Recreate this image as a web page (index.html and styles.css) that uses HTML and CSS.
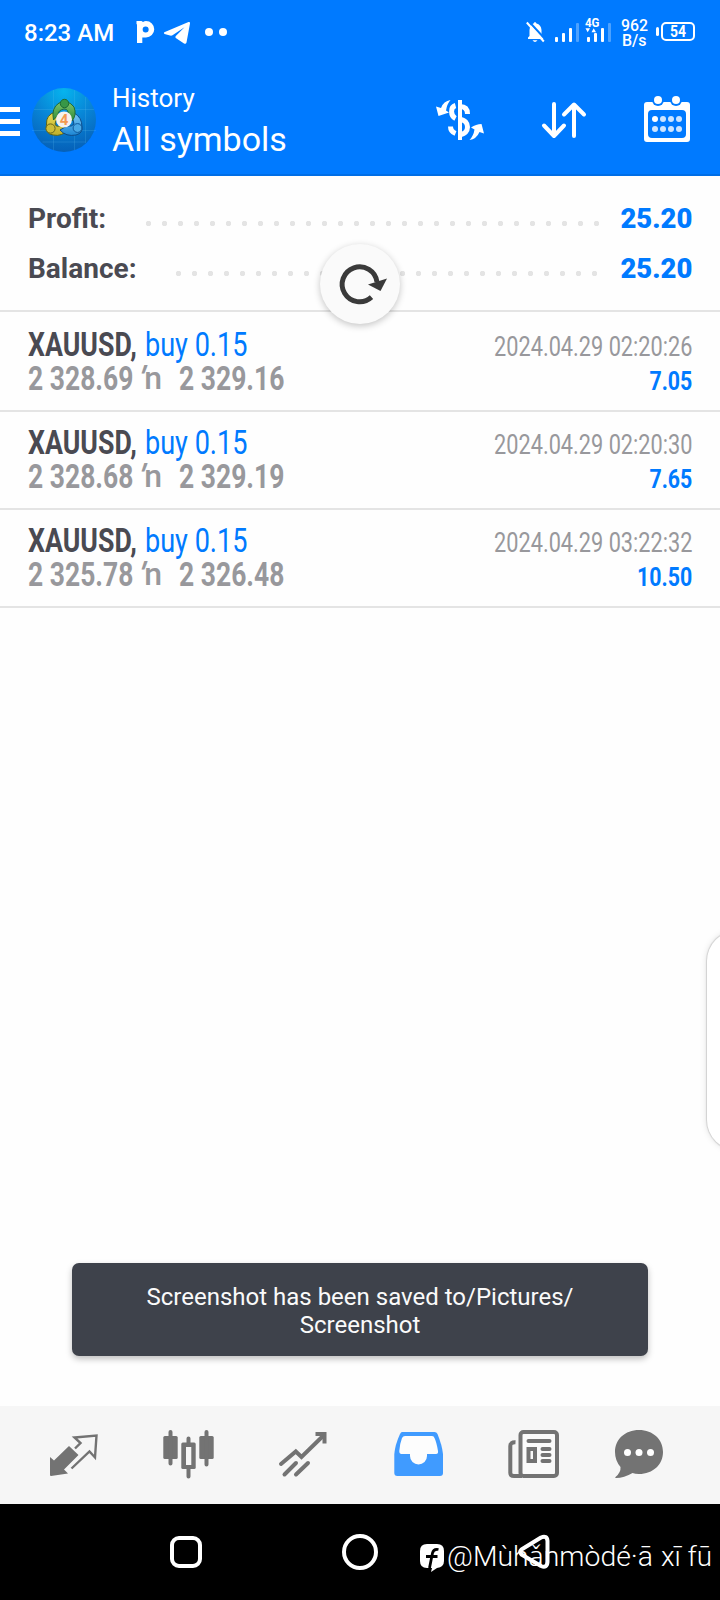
FILE: index.html
```html
<!DOCTYPE html>
<html lang="en">
<head>
<meta charset="utf-8">
<title>History</title>
<link rel="stylesheet" href="styles.css">
</head>
<body>
<div class="screen">
  <div class="statusbar">
    <span class="clock">8:23 AM</span>
    <svg class="notes" width="110" height="64" viewBox="130 0 110 64" fill="#fff">
      <path fill-rule="evenodd" d="M136.5 21H141.500L143 22C144 21.200 145 21 146 21A8.100 8.100 0 0 1 146 37.500H142.300V43H137V24.500L136.500 24ZM145.600 26.500A3 3 0 1 0 145.700 32.500A3 3 0 0 0 145.600 26.500Z"/>
      <path d="M164.300 32.300L188.500 22.100Q190.400 21.500 190 23.500L186.500 42.500Q186 44.500 184 43.500L175.800 38Q174.800 37.200 175.800 36L184.500 27.300L172.500 35.300Q171.500 36 170 35.600L164.500 33.900Q163.300 33.200 164.300 32.300Z"/>
      <circle cx="209" cy="32" r="4"/><circle cx="223" cy="32" r="4"/>
    </svg>
    <svg class="signals" width="180" height="64" viewBox="520 0 180 64" fill="#fff">
      <path d="M528 39V37.500L529.500 36V30Q530 24.500 533.500 23.500Q535 20.500 536.500 23.500Q541 24.500 541.500 30V36L543.500 38V39ZM532.500 40.300H537.500Q535 43.500 532.500 40.300Z"/>
      <path d="M528 20.500L545.500 39.500" stroke="#007aff" stroke-width="2"/>
      <path d="M526.800 22.500L543.800 41.500" stroke="#fff" stroke-width="2"/>
      <rect x="555" y="37" width="3" height="5" rx="1"/><rect x="562" y="33" width="3" height="9" rx="1"/><rect x="569" y="28" width="3" height="14" rx="1"/><rect x="576" y="23" width="3" height="19" rx="1" opacity=".3"/>
      <rect x="587" y="37" width="3" height="5" rx="1"/><rect x="594" y="33" width="3" height="9" rx="1"/><rect x="601" y="28" width="3" height="14" rx="1"/><rect x="608" y="23" width="3" height="19" rx="1" opacity=".3"/>
      <path d="M585.500 28.300H590L587.700 32.300ZM591.500 32.300H596L593.700 28.300Z"/>
      <text class="tiny" x="585" y="27" textLength="14.500" lengthAdjust="spacingAndGlyphs">4G</text>
      <text class="rate" x="621" y="30.500" textLength="27" lengthAdjust="spacingAndGlyphs">962</text>
      <text class="rate" x="622" y="46" textLength="24.500" lengthAdjust="spacingAndGlyphs">B/s</text>
      <rect x="662" y="23" width="32" height="17" rx="4" fill="none" stroke="#fff" stroke-width="2"/>
      <rect x="656" y="27" width="3" height="9" rx="1.500"/>
      <text class="level" x="670" y="37" textLength="16" lengthAdjust="spacingAndGlyphs">54</text>
    </svg>
  </div>

  <header class="appbar">
    <svg class="menu" width="104" height="110" viewBox="0 64 104 110">
      <defs>
        <radialGradient id="disc" cx=".5" cy=".05" r=".95"><stop offset="0" stop-color="#06b4ee"/><stop offset=".5" stop-color="#0884d6"/><stop offset="1" stop-color="#0560b8"/></radialGradient>
        <linearGradient id="green" x2="0" y2="1"><stop offset="0" stop-color="#83c66b"/><stop offset="1" stop-color="#288a38"/></linearGradient>
        <linearGradient id="gold" x2="0" y2="1"><stop offset="0" stop-color="#eadb55"/><stop offset="1" stop-color="#c0b02a"/></linearGradient>
        <linearGradient id="blue" x2="0" y2="1"><stop offset="0" stop-color="#7ccaf5"/><stop offset="1" stop-color="#1c86d4"/></linearGradient>
      </defs>
      <path fill="#fff" d="M0 107H20V112H0ZM0 119H20V124H0ZM0 131H20V136H0Z"/>
      <circle cx="64" cy="120" r="32" fill="url(#disc)"/>
      <path stroke="#63c4f0" stroke-opacity=".2" d="M53.500 90V150M74.500 90V150M85.500 97V143M34 109.500H94M32 130.500H96M42.500 142H85.500"/>
      <g stroke-width="1">
        <path fill="url(#gold)" stroke="#59651a" d="M55 112Q46 115 46.500 124Q45 134 53 135Q62 137 69 129L62 125Q56 128 55 124Q55 120 59 118Z"/>
        <path fill="url(#blue)" stroke="#0d4c8b" d="M74 113Q82 117 82 127Q83 133 76 135Q66 137 60 130L67 126Q72 127 74 124Q74 119 70 117Z"/>
        <path fill="url(#green)" stroke="#216a37" d="M53.500 120Q51 108 59 103Q68 99 74 107Q77 115 72 121L68 115Q69 109 64 109Q58 110 58 115Z"/>
        <circle cx="64.500" cy="103.500" r="4.200" fill="#379747" stroke="#1c6b35"/>
        <circle cx="50.500" cy="128.500" r="4.600" fill="#cdbd38" stroke="#67651a"/>
        <circle cx="77.500" cy="128" r="4.400" fill="#48a8e6" stroke="#0d579b"/>
      </g>
      <circle cx="64" cy="119.500" r="8" fill="#f4f1ee"/>
      <text class="four" x="64" y="125" text-anchor="middle">4</text>
    </svg>
    <div class="titles"><div class="small-title">History</div><div class="big-title">All symbols</div></div>
    <svg class="actions" width="284" height="110" viewBox="426 64 284 110" fill="none" stroke="#fff">
      <path stroke-width="4" d="M460 100V140"/>
      <path stroke-width="5" d="M467.500 114Q467.500 106.500 460 106.500M455.500 105.500C450 107 450.500 116 455.500 118.500M460 119.500C470 120 470 134 460 134.500M450.500 126.500Q450.500 131.500 455.500 133.500"/>
      <path fill="#fff" stroke="none" d="M450.500 100Q443.500 101 441 108L436 106.500L438.500 116L449 112.500L446 110.500Q447 104 450.500 100ZM469.500 140Q476.500 139 479.500 132L484 133.500L481.500 124Q476 124 471 127.500L474.500 129.500Q473.500 136 469.500 140Z"/>
      <path stroke-width="4" stroke-linecap="round" stroke-linejoin="round" d="M554 104V135.500M544 125.500L554 136L564 125.500M574 136V105M564 114.500L574 104.500L584 114.500"/>
      <path fill="#fff" stroke="none" fill-rule="evenodd" d="M647 102H687Q690 102 690 105V139Q690 142 687 142H647Q644 142 644 139V105Q644 102 647 102ZM652 110Q648 110 648 114V134Q648 138 652 138H682Q686 138 686 134V114Q686 110 682 110Z"/>
      <g stroke="none"><g fill="#007aff"><circle cx="658" cy="100" r="6"/><circle cx="676" cy="100" r="6"/></g><g fill="#fff"><circle cx="658" cy="100" r="4"/><circle cx="676" cy="100" r="4"/><circle cx="655" cy="119" r="3"/></g>
      <g fill="#cce4ff"><circle cx="663" cy="119" r="3"/><circle cx="671" cy="119" r="3"/><circle cx="679" cy="119" r="3"/><circle cx="655" cy="129" r="3"/><circle cx="663" cy="129" r="3"/><circle cx="671" cy="129" r="3"/><circle cx="679" cy="129" r="3"/></g></g>
    </svg>
  </header>

  <main class="content">
    <section class="summary">
      <div class="total"><span>Profit:</span><i class="dots dots-profit"></i><b>25.20</b></div>
      <div class="total"><span>Balance:</span><i class="dots dots-balance"></i><b>25.20</b></div>
    </section>
    <div class="deal">
      <div class="line"><span class="symbol">XAUUSD,</span><span class="side">buy 0.15</span><span class="date">2024.04.29 02:20:26</span></div>
      <div class="line"><span class="price">2 328.69</span><span class="arrow"><em>′</em>n</span><span class="price">2 329.16</span><span class="gain">7.05</span></div>
    </div>
    <div class="deal">
      <div class="line"><span class="symbol">XAUUSD,</span><span class="side">buy 0.15</span><span class="date">2024.04.29 02:20:30</span></div>
      <div class="line"><span class="price">2 328.68</span><span class="arrow"><em>′</em>n</span><span class="price">2 329.19</span><span class="gain">7.65</span></div>
    </div>
    <div class="deal">
      <div class="line"><span class="symbol">XAUUSD,</span><span class="side">buy 0.15</span><span class="date">2024.04.29 03:22:32</span></div>
      <div class="line"><span class="price">2 325.78</span><span class="arrow"><em>′</em>n</span><span class="price">2 326.48</span><span class="gain">10.50</span></div>
    </div>
  </main>

  <nav class="tabs">
    <svg width="115" height="98" viewBox="16 1406 115 98" fill="#737373"><path d="M50 1457L54 1460.500L69 1446L78.500 1455L64 1469.500L68 1473.500L51 1476Q50 1476 50 1475Z"/><path fill="none" stroke="#737373" stroke-width="2.400" d="M71.500 1468.500L89.500 1451.500L95 1457.500L96.500 1435.500L74.500 1437.500L80.500 1443L75 1448.500"/></svg>
    <svg width="115" height="98" viewBox="131 1406 115 98" fill="#737373"><rect x="163.300" y="1436" width="14.400" height="23" rx="1.500"/><rect x="199.300" y="1436" width="14.400" height="23" rx="1.500"/><path stroke="#737373" stroke-width="4" stroke-linecap="round" d="M170.500 1432V1463.500M206.500 1432V1464.500M188.500 1438.500V1443M188.500 1469V1476.500"/><rect x="181.300" y="1442.500" width="14.400" height="26.500" rx="1.500"/><path fill="#f6f6f6" d="M186 1447H191.300V1465H186Z"/></svg>
    <svg width="115" height="98" viewBox="246 1406 115 98" fill="none" stroke="#737373" stroke-width="4" stroke-linecap="round"><path d="M281 1464L295.800 1451.500L301.500 1457L324 1435M284.500 1474.500L296 1463M296 1474.500L308 1463"/><path stroke-linecap="butt" d="M315.500 1434H324.500V1443.500"/></svg>
    <svg width="115" height="98" viewBox="361 1406 115 98" fill="#409bff"><path d="M402 1432H434.500Q436.500 1432 437.500 1434Q442 1445 443 1454V1473Q443 1476 440 1476H397.300Q394.300 1476 394.300 1473V1454Q395 1445 400 1434Q401 1432 402 1432Z"/><path fill="#fdfdfd" d="M405 1436Q403 1436 402 1438Q400 1443 399.300 1451Q399.200 1454 401.500 1454H410V1456A8.500 8.500 0 0 0 427 1456V1454H436Q438.500 1454 438 1451Q436.500 1442 434.500 1438Q434 1436 432 1436Z"/></svg>
    <svg width="115" height="98" viewBox="476 1406 115 98" fill="none" stroke="#737373" stroke-width="4"><rect x="520.500" y="1432" width="36.500" height="44" rx="3" fill="#fafafa"/><path d="M515.500 1442.300Q510.300 1442 510.300 1446V1473Q510.300 1476 514 1476H522"/><path stroke-linecap="round" d="M528.500 1441H549.500M542.500 1449H549.500M542.500 1455H549.500M542.500 1461H549.500"/><rect x="528.500" y="1449" width="6.500" height="12"/></svg>
    <svg width="115" height="98" viewBox="591 1406 115 98" fill="#737373"><path d="M639 1430C653 1430 663 1439.500 663 1452C663 1464.500 653 1474 639 1474Q635 1474 632.500 1473Q624 1478 616 1478Q614.500 1478 615.500 1477Q621 1472.500 620.500 1467Q615 1460.500 615 1452C615 1439.500 625 1430 639 1430Z"/><g fill="#fff"><circle cx="627.500" cy="1452.500" r="3.500"/><circle cx="639" cy="1452.500" r="3.500"/><circle cx="650.500" cy="1452.500" r="3.500"/></g></svg>
  </nav>
  <div class="sysnav">
    <svg width="720" height="96" viewBox="0 1504 720 96" fill="none" stroke="#fff" stroke-width="4">
      <rect x="172" y="1538" width="28" height="28" rx="7"/>
      <circle cx="360" cy="1552" r="16"/>
      <path stroke-linejoin="round" d="M521.500 1549.500L541 1537.500Q547 1535 547.500 1541V1562Q547 1568.500 541 1566L521.500 1554.500Q519 1552 521.500 1549.500Z"/>
      <path fill="#fff" stroke="none" d="M427 1544H437Q444 1544 444 1551V1561Q444 1567 437 1568L431 1572L432 1568H427Q420 1568 420 1561V1551Q420 1544 427 1544Z"/>
      <path stroke="#000" stroke-width="2.800" d="M438.500 1549.500Q433.500 1548.500 432.500 1553L429.500 1568M426 1556.500H437.500"/>
      <text class="watermark" x="447" y="1565.500" textLength="206" lengthAdjust="spacingAndGlyphs">@Mùhǎnmòdé·ā</text>
      <text class="watermark" x="661" y="1565.500" textLength="51" lengthAdjust="spacingAndGlyphs">xī fū</text>
    </svg>
  </div>

  <div class="refresh"><svg width="80" height="80" viewBox="320 244 80 80"><path fill="none" stroke="#3a3a3a" stroke-width="5" d="M377 282A17.500 17.500 0 1 0 371.500 297.200"/><path fill="#3a3a3a" d="M368 284.500L387 278.500L380.500 291Z"/></svg></div>
  <div class="edge-panel"></div>
  <div class="toast">Screenshot has been saved to/Pictures/<br>Screenshot</div>
</div>
</body>
</html>
```

FILE: styles.css
```css
* { box-sizing: border-box; }
body { margin: 0; font-family: Roboto, "Liberation Sans", sans-serif; background: #fefefe; }
svg { display: block; flex: none; }
.screen { position: relative; width: 720px; height: 1600px; overflow: hidden; display: flex; flex-direction: column; background: #fefefe; }
.statusbar { height: 64px; flex: none; display: flex; background: #007aff; color: #fff; padding-left: 24px; }
.clock { width: 106px; font-size: 24px; font-weight: 500; line-height: 67px; white-space: nowrap; }
.signals { margin-left: 280px; }
.tiny { font: 700 12px Roboto, sans-serif; }
.rate { font: 500 16px Roboto, sans-serif; }
.level { font: 700 16px Roboto, sans-serif; }
.four { font: 700 15px Roboto, sans-serif; fill: #f39a50; }
.appbar { height: 112px; flex: none; display: flex; background: #007aff; border-bottom: 2px solid #006ee6; color: #fff; }
.titles { width: 322px; padding: 17px 0 0 8px; white-space: nowrap; }
.small-title { font-size: 26px; line-height: 34px; }
.big-title { font-size: 34px; line-height: 48px; }
.content { flex: 1; }
.summary { height: 136px; padding-top: 17px; border-bottom: 2px solid #e4e4e4; margin-bottom: 2px; }
.total { height: 50px; padding: 0 28px; display: flex; align-items: center; font-size: 28px; font-weight: 700; color: #4a4a52; }
.total b { color: #007aff; margin-left: auto; transform: scaleX(.98); transform-origin: 100% 50%; }
.dots { height: 16px; margin-top: 10px; background: radial-gradient(circle at 8.500px 8.500px, #e4e4e4 2.400px, transparent 3px) 0 0 / 16px 16px; }
.total span { width: 112px; }
.dots-profit { width: 464px; }
.total .dots-balance { width: 432px; margin-left: 30px; }
.deal { height: 98px; padding: 14px 28px 0; border-bottom: 2px solid #e4e4e4; }
.line { display: flex; height: 34px; line-height: 33px; font-size: 33px; white-space: nowrap; }
.line span { display: block; transform-origin: 0 50%; }
.line .symbol { width: 117px; font-weight: 700; color: #4a4a52; transform: scaleX(.81); }
.line .side { width: 120px; color: #007aff; transform: scaleX(.82); }
.line .date, .line .gain { margin-left: auto; padding-top: 2px; line-height: 34px; transform-origin: 100% 50%; font-size: 27px; }
.line .date { color: #98989c; transform: scaleX(.805); }
.line .gain { font-weight: 700; color: #007aff; font-size: 26px; transform: scaleX(.82); }
.line .price { width: 110px; font-weight: 700; color: #98989c; transform: scaleX(.802); }
.line .arrow { width: 41px; padding-left: 1px; font-size: 32px; font-weight: 500; color: #98989c; }
.arrow em { display: inline-block; font-style: normal; font-weight: 700; transform: skewX(-18deg); }
.tabs { height: 98px; flex: none; display: flex; padding-left: 16px; background: #f6f6f6; }
.sysnav { height: 96px; flex: none; background: #000; }
.watermark { font: 300 27px Roboto, "Noto Sans", sans-serif; fill: #fff; stroke: none; }
.refresh { position: absolute; left: 320px; top: 244px; border-radius: 50%; background: #fafafa; box-shadow: 0 2px 7px rgba(0,0,0,.23); }
.edge-panel { position: absolute; left: 707px; top: 931px; width: 60px; height: 219px; border-radius: 30px; background: #fff; box-shadow: 0 0 1px 1px rgba(0,0,0,.13), 0 0 7px rgba(0,0,0,.13); }
.toast { position: absolute; left: 72px; top: 1263px; width: 576px; height: 93px; padding-top: 20px; border-radius: 7px; background: #3e424b; color: #fafafa; font-size: 24px; line-height: 28px; text-align: center; box-shadow: 0 3px 6px rgba(0,0,0,.25); }
```
